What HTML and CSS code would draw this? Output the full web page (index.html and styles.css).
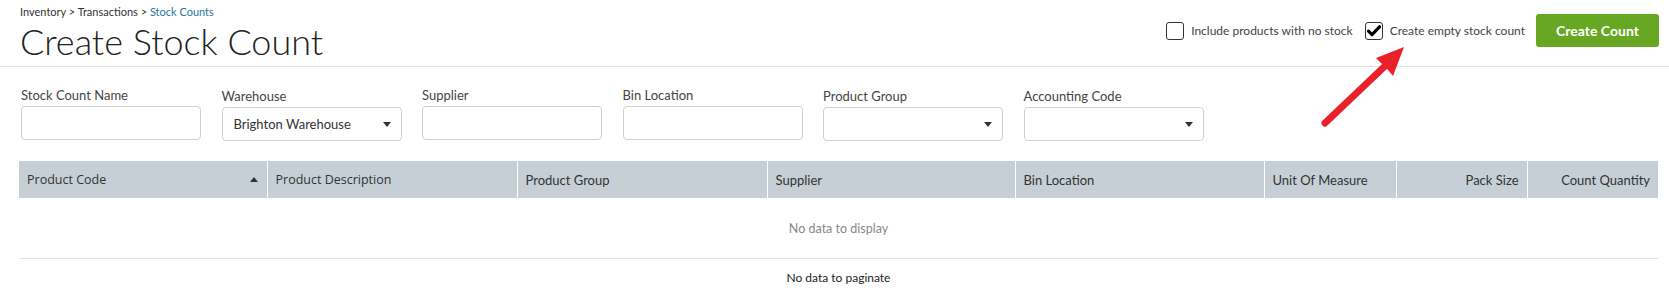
FILE: index.html
```html
<!DOCTYPE html>
<html lang="en">
<head>
  <meta charset="UTF-8">
  <title>Create Stock Count</title>
  <meta name="viewport" content="width=device-width, initial-scale=1.0">
  <link rel="stylesheet" href="styles.css">
</head>
<body>
  <header class="page-head">
    <div class="title-block">
      <div class="crumbs">Inventory &gt; Transactions &gt; <a href="#">Stock Counts</a></div>
      <h1>Create Stock Count</h1>
    </div>
    <div class="actions">
      <label class="check"><span class="box"></span>Include products with no stock</label>
      <label class="check"><span class="box">
        <svg width="14" height="12" viewBox="0 0 14 12"><path d="M1.5 6.2 L5 9.6 L12.5 1.8" fill="none" stroke="#000" stroke-width="3.2" stroke-linecap="round" stroke-linejoin="round"/></svg>
      </span>Create empty stock count</label>
      <button class="btn-create">Create Count</button>
    </div>
  </header>

  <div class="filters">
    <div class="field">
      <label>Stock Count Name</label>
      <div class="input"></div>
    </div>
    <div class="field drop">
      <label>Warehouse</label>
      <div class="input select"><span>Brighton Warehouse</span><i class="caret"></i></div>
    </div>
    <div class="field">
      <label>Supplier</label>
      <div class="input"></div>
    </div>
    <div class="field">
      <label>Bin Location</label>
      <div class="input"></div>
    </div>
    <div class="field drop">
      <label>Product Group</label>
      <div class="input select"><span></span><i class="caret"></i></div>
    </div>
    <div class="field drop">
      <label>Accounting Code</label>
      <div class="input select"><span></span><i class="caret"></i></div>
    </div>
  </div>

  <table class="grid">
    <colgroup>
      <col style="width:248px"><col style="width:250px"><col style="width:250px"><col style="width:248px">
      <col style="width:249px"><col style="width:132px"><col style="width:131px"><col style="width:131px">
    </colgroup>
    <thead>
      <tr>
        <th class="alt"><div class="sorted">Product Code<i class="sort-up"></i></div></th>
        <th class="alt">Product Description</th>
        <th>Product Group</th>
        <th>Supplier</th>
        <th>Bin Location</th>
        <th>Unit Of Measure</th>
        <th class="num">Pack Size</th>
        <th class="num">Count Quantity</th>
      </tr>
    </thead>
    <tbody>
      <tr><td colspan="8" class="empty">No data to display</td></tr>
    </tbody>
  </table>
  <div class="pager">No data to paginate</div>

  <!-- annotation arrow pointing at the checkbox -->
  <svg class="callout" width="100" height="90" viewBox="1315 40 100 90">
    <line x1="1325" y1="123" x2="1384" y2="67" stroke="#e8212b" stroke-width="7" stroke-linecap="round"/>
    <polygon points="1404,47 1376,58 1382,64 1388,70 1393,76" fill="#e8212b"/>
  </svg>
</body>
</html>
```

FILE: styles.css
```css
body {
  margin: 0;
  background: #fff;
  color: #333;
  font-family: 'Lato', 'Liberation Sans', sans-serif;
  position: relative;
}

.page-head {
  display: flex;
  justify-content: space-between;
  align-items: flex-start;
  height: 66px;
  padding: 0 10px 0 20px;
  border-bottom: 1px solid #e2e2e2;
}

.crumbs {
  font-size: 11px;
  line-height: 13px;
  padding-top: 5px;
  color: #333;
}

.crumbs a {
  color: #2a7896;
  text-decoration: none;
}

h1 {
  margin: 3px 0 0;
  font-size: 36px;
  line-height: 40px;
  font-weight: 300;
  color: #222;
}

.actions {
  display: flex;
  align-items: center;
  margin-top: 14px;
}

.check {
  display: flex;
  align-items: center;
  font-size: 12px;
  color: #444;
  margin-right: 12px;
}

.check:last-of-type {
  margin-right: 11px;
}

.box {
  width: 16px;
  height: 16px;
  border: 1px solid #333;
  border-radius: 3px;
  margin-right: 7px;
  display: flex;
  align-items: center;
  justify-content: center;
}

.btn-create {
  height: 33px;
  width: 123px;
  border: none;
  border-radius: 3px;
  background: #68a723;
  color: #fff;
  font-family: inherit;
  font-size: 14px;
  font-weight: bold;
}

.filters {
  display: flex;
  gap: 20.5px;
  padding: 20px 0 0 21px;
}

.field label {
  display: block;
  font-size: 13px;
  line-height: 16px;
  color: #444;
  margin-bottom: 3px;
}

.field.drop {
  padding-top: 1px;
}

.input {
  width: 178px;
  height: 32px;
  border: 1px solid #cfcfcf;
  border-radius: 4px;
}

.select {
  display: flex;
  align-items: center;
  justify-content: space-between;
  padding: 0 10px 0 11px;
  width: 157px;
  font-size: 13px;
  color: #333;
}

.caret {
  width: 0;
  height: 0;
  border-left: 4px solid transparent;
  border-right: 4px solid transparent;
  border-top: 5px solid #333;
}

.grid {
  border-collapse: collapse;
  table-layout: fixed;
  width: 1639px;
  margin: 20px 11px 0 19px;
}

.grid th {
  background: #c6cfd6;
  height: 37px;
  padding: 0 8px;
  text-align: left;
  font-size: 13px;
  font-weight: normal;
  color: #333;
  border-left: 1px solid #fff;
}

.grid th:first-child {
  border-left: none;
}

.grid th.alt {
  font-family: 'Open Sans', sans-serif;
  font-size: 12.5px;
}

.grid th.num {
  text-align: right;
}

.sorted {
  display: flex;
  align-items: center;
  justify-content: space-between;
  padding-right: 1px;
}

.sort-up {
  width: 0;
  height: 0;
  border-left: 4px solid transparent;
  border-right: 4px solid transparent;
  border-bottom: 5px solid #333;
}

.empty {
  height: 60px;
  padding: 0;
  text-align: center;
  font-size: 12.5px;
  color: #888;
  border-bottom: 1px solid #e2e2e2;
}

.pager {
  width: 1639px;
  margin: 0 11px 0 19px;
  text-align: center;
  font-size: 12px;
  line-height: 14px;
  padding: 12px 0;
  color: #222;
}

.callout {
  position: absolute;
  left: 1315px;
  top: 40px;
}
```
